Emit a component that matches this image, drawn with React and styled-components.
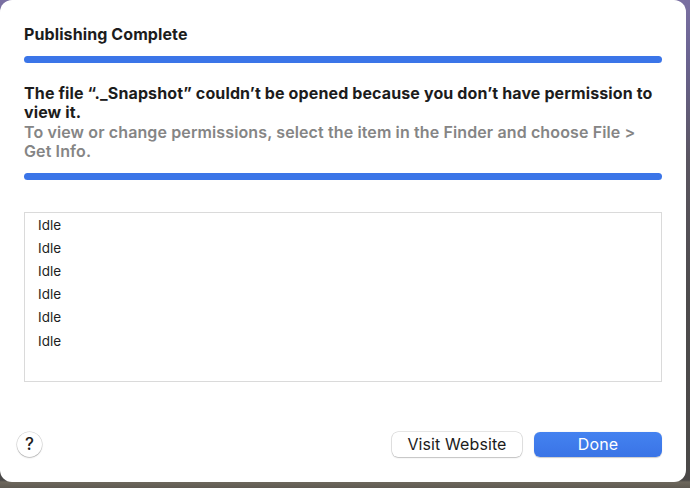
import React from "react";
import styled, { createGlobalStyle } from "styled-components";

const Global = createGlobalStyle`
  html, body { margin: 0; padding: 0; }
  body {
    width: 690px;
    height: 488px;
    overflow: hidden;
    background:
      linear-gradient(180deg, rgba(0,0,0,0) 0px, rgba(0,0,0,0) 480px, #6d675c 482px, #5f5a52 488px),
      linear-gradient(180deg, #7a70a2 0px, #6a6390 60px, #5a5560 160px, #4d4b4c 300px, #4a4847 488px);
    font-family: Inter, "Open Sans", "Liberation Sans", sans-serif;
    -webkit-font-smoothing: antialiased;
  }
`;

const Dialog = styled.div`
  box-sizing: border-box;
  width: 686px;
  height: 482px;
  background: #ffffff;
  border-radius: 12px;
  padding: 25px 24px 0 24px;
  display: flex;
  flex-direction: column;
`;

const Title = styled.div`
  font-size: 16px;
  font-weight: 700;
  line-height: 18px;
  color: #1c1c1c;
  letter-spacing: 0.1px;
`;

const Bar = styled.div`
  height: 7px;
  border-radius: 4px;
  background: #3b75e8;
  margin-top: ${(p) => p.$mt}px;
`;

const Message = styled.div`
  margin-top: 21px;
  font-size: 16px;
  line-height: 19.4px;
  letter-spacing: 0.12px;
`;

const Primary = styled.div`
  font-weight: 700;
  color: #1c1c1c;
`;

const Secondary = styled.div`
  font-weight: 600;
  color: #858585;
`;

const List = styled.div`
  margin-top: 32px;
  height: 170px;
  box-sizing: border-box;
  border: 1px solid #dadada;
  padding: 1px 0 0 13px;
  display: flex;
  flex-direction: column;
`;

const Item = styled.div`
  font-size: 13.5px;
  line-height: 23.2px;
  color: #1e1e1e;
`;

const Footer = styled.div`
  margin-top: 50px;
  display: flex;
  align-items: center;
`;

const Help = styled.button`
  width: 25px;
  height: 25px;
  margin-left: -7px;
  border-radius: 50%;
  border: none;
  background: #ffffff;
  box-shadow: 0 0 0 0.5px rgba(0,0,0,0.18), 0 1px 1.5px rgba(0,0,0,0.18);
  font-family: inherit;
  font-size: 17px;
  font-weight: 500;
  color: #1c1c1c;
  padding: 0;
  display: flex;
  align-items: center;
  justify-content: center;
`;

const Spacer = styled.div`
  flex: 1;
`;

const Button = styled.button`
  box-sizing: border-box;
  height: 25px;
  width: ${(p) => p.$w}px;
  margin-left: ${(p) => p.$ml || 0}px;
  border-radius: 6px;
  font-family: inherit;
  font-size: 16px;
  font-weight: 400;
  letter-spacing: 0.1px;
  padding: 0;
  border: none;
  ${(p) =>
    p.$primary
      ? `
    background: linear-gradient(180deg, #4482f0 0%, #3a74e6 100%);
    color: #ffffff;
    box-shadow: 0 0.5px 1px rgba(0,0,0,0.2);
  `
      : `
    background: #ffffff;
    color: #1c1c1c;
    box-shadow: 0 0 0 0.5px rgba(0,0,0,0.2), 0 1px 1.5px rgba(0,0,0,0.16);
  `}
`;

export default function App() {
  const items = ["Idle", "Idle", "Idle", "Idle", "Idle", "Idle"];
  return (
    <>
      <Global />
      <Dialog>
        <Title>Publishing Complete</Title>
        <Bar $mt={13} />
        <Message>
          <Primary>
            The file “._Snapshot” couldn’t be opened because you don’t have permission to view it.
          </Primary>
          <Secondary>
            To view or change permissions, select the item in the Finder and choose File &gt; Get Info.
          </Secondary>
        </Message>
        <Bar $mt={11} />
        <List>
          {items.map((t, i) => (
            <Item key={i}>{t}</Item>
          ))}
        </List>
        <Footer>
          <Help>?</Help>
          <Spacer />
          <Button $w={130} $ml={0}>Visit Website</Button>
          <Button $w={128} $ml={12} $primary>
            Done
          </Button>
        </Footer>
      </Dialog>
    </>
  );
}
